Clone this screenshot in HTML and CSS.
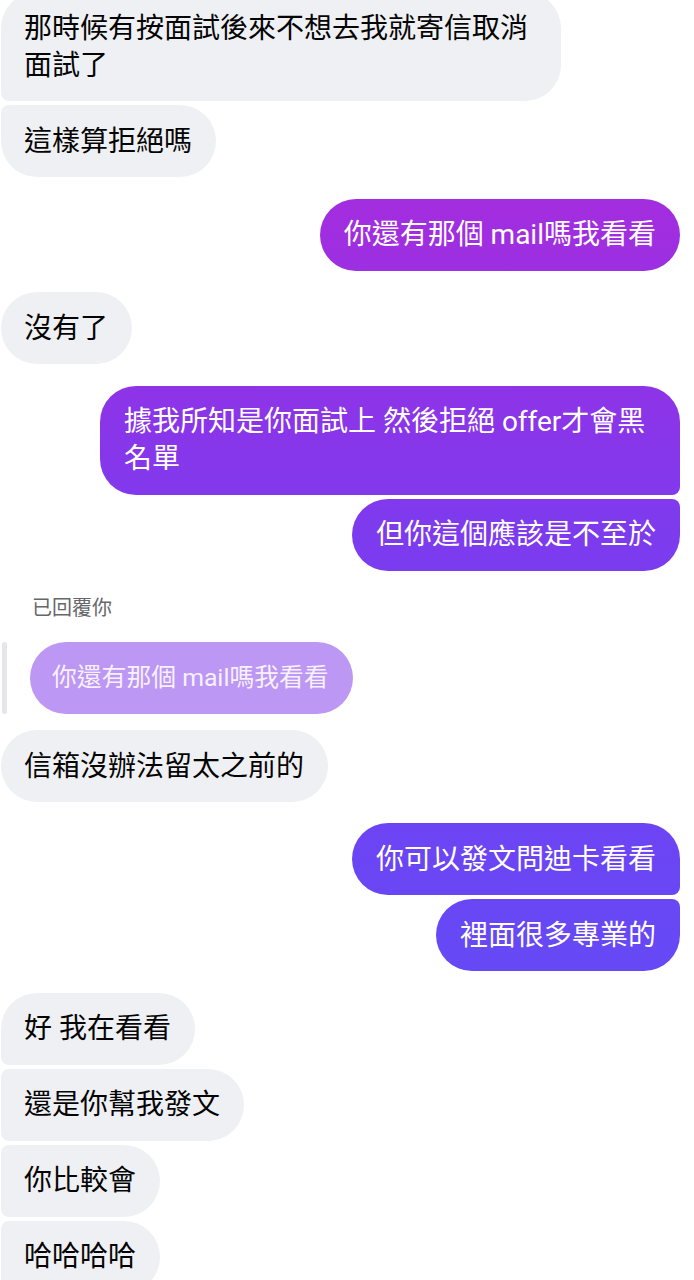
FILE: index.html
```html
<!DOCTYPE html>
<html lang="zh-Hant">
<head>
<meta charset="utf-8">
<link rel="stylesheet" href="styles.css">
</head>
<body>
<div class="chat">
  <div class="msg in first">那時候有按面試後來不想去我就寄信取消面試了</div>
  <div class="msg in last grouped">這樣算拒絕嗎</div>

  <div class="msg out single spaced">你還有那個 mail嗎我看看</div>

  <div class="msg in single spaced">沒有了</div>

  <div class="msg out first spaced">據我所知是你面試上 然後拒絕 offer才會黑名單</div>
  <div class="msg out last grouped">但你這個應該是不至於</div>

  <div class="reply-label">已回覆你</div>
  <div class="reply-row">
    <div class="reply-bar"></div>
    <div class="reply-bubble">你還有那個 mail嗎我看看</div>
  </div>
  <div class="msg in single after-reply">信箱沒辦法留太之前的</div>

  <div class="msg out first spaced-sm">你可以發文問迪卡看看</div>
  <div class="msg out last grouped">裡面很多專業的</div>

  <div class="msg in first spaced">好 我在看看</div>
  <div class="msg in middle grouped">還是你幫我發文</div>
  <div class="msg in middle grouped">你比較會</div>
  <div class="msg in middle grouped">哈哈哈哈</div>
</div>
</body>
</html>
```

FILE: styles.css
```css
* { box-sizing: border-box; }
html, body {
  margin: 0;
  padding: 0;
  background: #ffffff;
  overflow: hidden;
}
body {
  width: 694px;
  height: 1280px;
  font-family: Roboto, "Noto Sans CJK TC", "Noto Sans", sans-serif;
}
.chat {
  display: flex;
  flex-direction: column;
  margin-top: -8px;
}
.msg {
  font-size: 28px;
  line-height: 37px;
  padding: 17.5px 24px;
  border-radius: 36px;
  max-width: 560px;
}
.in {
  align-self: flex-start;
  margin-left: 1px;
  padding-left: 23px;
  background: #eff0f3;
  color: #050505;
}
.out {
  align-self: flex-end;
  margin-right: 14px;
  max-width: 580px;
  color: #ffffff;
  background: linear-gradient(180deg,
    #ad29da 0px,
    #a02ee0 234px,
    #8836ea 440px,
    #7d3bee 534px,
    #6b45f4 859px,
    #6748f5 935px,
    #5c4ff7 1280px) fixed;
}
.grouped { margin-top: 4px; }
.spaced { margin-top: 21.5px; }
.spaced-sm { margin-top: 21px; }
.after-reply { margin-top: 16px; }

.in.first { border-radius: 36px 36px 36px 8px; }
.in.middle { border-radius: 8px 36px 36px 8px; }
.in.last { border-radius: 8px 36px 36px 36px; }
.out.first { border-radius: 36px 36px 8px 36px; }
.out.middle { border-radius: 36px 8px 8px 36px; }
.out.last { border-radius: 36px 8px 36px 36px; }

.reply-label {
  margin-top: 25px;
  margin-left: 32px;
  font-size: 20px;
  line-height: 24px;
  color: #65676b;
}
.reply-row {
  display: flex;
  margin-top: 22.5px;
  align-items: stretch;
}
.reply-bar {
  width: 5px;
  margin-left: 2px;
  border-radius: 3px;
  background: #e4e6eb;
}
.reply-bubble {
  margin-left: 23px;
  padding: 18px 24px 18px 22px;
  font-size: 24.8px;
  line-height: 36px;
  border-radius: 36px;
  background: #bc97f4;
  color: #f7f1fe;
}
```
